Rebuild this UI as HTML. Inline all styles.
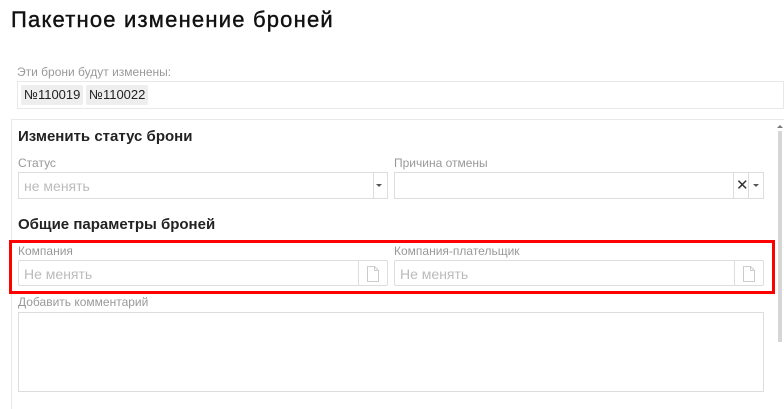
<!DOCTYPE html>
<html><head><meta charset="utf-8"><style>
*{box-sizing:border-box;margin:0;padding:0}
body{width:784px;height:404px;background:#fff;font-family:"Liberation Sans","DejaVu Sans",sans-serif;position:relative;overflow:hidden;color:#222}
.a{position:absolute}
.lbl{font-size:12px;color:#999;white-space:nowrap}
.box{border:1px solid #ddd;background:#fff}
.h{font-size:15px;font-weight:bold;color:#222;white-space:nowrap}
.ph{font-size:14px;color:#bbb;white-space:nowrap}
.tag{background:#eee;border-radius:2px;font-size:13px;color:#222;height:20px;line-height:20px;padding:0 3px}
.div{position:absolute;top:0;bottom:0;border-left:1px solid #ddd}
.caret{width:0;height:0;border-left:3px solid transparent;border-right:3px solid transparent;border-top:3px solid #555}
</style></head><body>
<div class="a" style="left:11px;top:7px;font-size:22px;letter-spacing:1.2px;-webkit-text-stroke:0.4px #111;color:#111;white-space:nowrap">Пакетное изменение броней</div>
<div class="a lbl" style="left:17px;top:65px">Эти брони будут изменены:</div>
<div class="a box" style="left:17px;top:81px;width:767px;height:28px;border-color:#e8e8e8"></div>
<div class="a tag" style="left:21px;top:85px">№110019</div>
<div class="a tag" style="left:86px;top:85px">№110022</div>
<div class="a" style="left:11px;top:119px;width:773px;height:290px;border-top:1px solid #e8e8e8;border-left:1px solid #e8e8e8"></div>
<div class="a" style="left:778px;top:131px;width:4px;height:211px;background:#d6d6d6"></div>
<div class="a caret" style="left:777px;top:125px;border-top:none;border-bottom:3px solid #777"></div>
<div class="a h" style="left:18px;top:128px">Изменить статус брони</div>
<div class="a lbl" style="left:18px;top:156px">Статус</div>
<div class="a box" style="left:18px;top:172px;width:370px;height:27px">
 <div class="ph a" style="left:5px;top:5px">не менять</div>
 <div class="div" style="left:354px"></div>
 <div class="a caret" style="left:357px;top:11px"></div>
</div>
<div class="a lbl" style="left:394px;top:156px">Причина отмены</div>
<div class="a box" style="left:394px;top:172px;width:370px;height:27px">
 <div class="div" style="left:338px"></div>
 <div class="a" style="left:341px;top:3px;font-size:15px;color:#333">✕</div>
 <div class="div" style="left:353px"></div>
 <div class="a caret" style="left:358px;top:11px"></div>
</div>
<div class="a h" style="left:18px;top:216px">Общие параметры броней</div>
<div class="a" style="left:9px;top:240px;width:766px;height:54px;border:3px solid #f00"></div>
<div class="a lbl" style="left:18px;top:244px">Компания</div>
<div class="a box" style="left:18px;top:260px;width:370px;height:26px;border-radius:2px">
 <div class="ph a" style="left:5px;top:5px">Не менять</div>
 <div class="div" style="left:339px"></div>
 <svg class="a" style="left:347px;top:5px" width="14" height="16" viewBox="0 0 14 16"><path d="M1.5 .5h7l4 4v11h-11z M8.5 .5v4h4" fill="none" stroke="#ccc"/></svg>
</div>
<div class="a lbl" style="left:394px;top:244px">Компания-плательщик</div>
<div class="a box" style="left:394px;top:260px;width:370px;height:26px;border-radius:2px">
 <div class="ph a" style="left:5px;top:5px">Не менять</div>
 <div class="div" style="left:339px"></div>
 <svg class="a" style="left:347px;top:5px" width="14" height="16" viewBox="0 0 14 16"><path d="M1.5 .5h7l4 4v11h-11z M8.5 .5v4h4" fill="none" stroke="#ccc"/></svg>
</div>
<div class="a lbl" style="left:18px;top:295px">Добавить комментарий</div>
<div class="a box" style="left:18px;top:312px;width:746px;height:80px"></div>
</body></html>
